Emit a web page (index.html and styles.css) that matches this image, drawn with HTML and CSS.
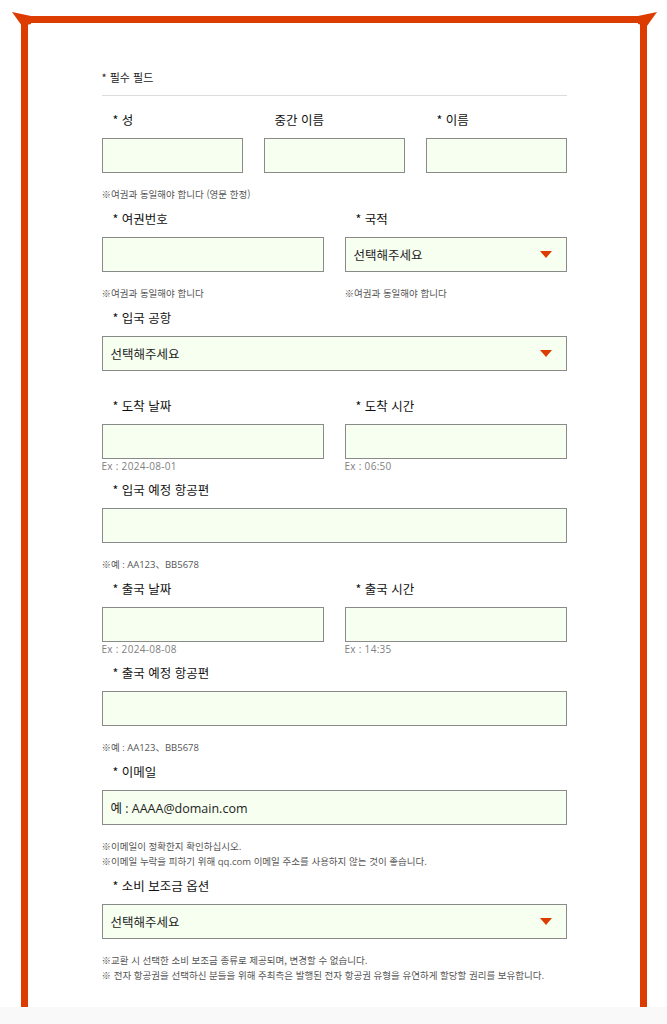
FILE: index.html
```html
<!DOCTYPE html>
<html lang="ko">
<head>
  <meta charset="UTF-8">
  <title>입국 정보 등록</title>
  <link rel="stylesheet" href="styles.css">
</head>
<body>

<div class="frame">
  <!-- flared corners -->
  <svg class="corner corner-left" width="20" height="16" viewBox="0 0 20 16">
    <polygon points="0,0 19,4 19,12 10,14" fill="#dc3c00"/>
  </svg>
  <svg class="corner corner-right" width="20" height="16" viewBox="0 0 20 16">
    <polygon points="20,0 1,4 1,12 10,14" fill="#dc3c00"/>
  </svg>

  <form class="entry-form">
    <div class="required-head">* 필수 필드</div>

    <div class="group">
      <div class="row three">
        <div class="field">
          <label>* 성</label>
          <input type="text">
        </div>
        <div class="field">
          <label>중간 이름</label>
          <input type="text">
        </div>
        <div class="field">
          <label>* 이름</label>
          <input type="text">
        </div>
      </div>
      <p class="note">※여권과 동일해야 합니다 (영문 한정)</p>
    </div>

    <div class="group">
      <div class="row two">
        <div class="field">
          <label>* 여권번호</label>
          <input type="text">
          <p class="note">※여권과 동일해야 합니다</p>
        </div>
        <div class="field">
          <label>* 국적</label>
          <div class="select-wrap"><select><option>선택해주세요</option></select></div>
          <p class="note">※여권과 동일해야 합니다</p>
        </div>
      </div>
    </div>

    <div class="group spaced">
      <label>* 입국 공항</label>
      <div class="select-wrap"><select><option>선택해주세요</option></select></div>
    </div>

    <div class="group">
      <div class="row two">
        <div class="field">
          <label>* 도착 날짜</label>
          <input type="text">
          <p class="hint">Ex : 2024-08-01</p>
        </div>
        <div class="field">
          <label>* 도착 시간</label>
          <input type="text">
          <p class="hint">Ex : 06:50</p>
        </div>
      </div>
    </div>

    <div class="group">
      <label>* 입국 예정 항공편</label>
      <input type="text">
      <p class="note latin">※예 : AA123、BB5678</p>
    </div>

    <div class="group">
      <div class="row two">
        <div class="field">
          <label>* 출국 날짜</label>
          <input type="text">
          <p class="hint">Ex : 2024-08-08</p>
        </div>
        <div class="field">
          <label>* 출국 시간</label>
          <input type="text">
          <p class="hint">Ex : 14:35</p>
        </div>
      </div>
    </div>

    <div class="group">
      <label>* 출국 예정 항공편</label>
      <input type="text">
      <p class="note latin">※예 : AA123、BB5678</p>
    </div>

    <div class="group">
      <label>* 이메일</label>
      <input type="text" class="email" placeholder="예 : AAAA@domain.com">
      <p class="note">※이메일이 정확한지 확인하십시오.<br>※이메일 누락을 피하기 위해 <span class="latin">qq.com</span> 이메일 주소를 사용하지 않는 것이 좋습니다.</p>
    </div>

    <div class="group">
      <label>* 소비 보조금 옵션</label>
      <div class="select-wrap"><select><option>선택해주세요</option></select></div>
      <p class="note">※교환 시 선택한 소비 보조금 종류로 제공되며, 변경할 수 없습니다.<br>※ 전자 항공권을 선택하신 분들을 위해 주최측은 발행된 전자 항공권 유형을 유연하게 할당할 권리를 보유합니다.</p>
    </div>
  </form>
</div>

<div class="page-bottom"></div>

</body>
</html>
```

FILE: styles.css
```css
body {
  margin: 0;
  background: #fff;
  font-family: "Noto Sans CJK KR", "Noto Sans", sans-serif;
  color: #222;
}

.frame {
  position: relative;
  margin: 16px 20px 0 21px;
  border: 7px solid #dc3c00;
  border-bottom: none;
  height: 991px;
  box-sizing: border-box;
  padding-top: 47px;
}

.corner {
  position: absolute;
  top: -11px;
}

.corner-left {
  left: -16px;
}

.corner-right {
  right: -17px;
}

.entry-form {
  width: 465px;
  margin: 0 auto;
}

.required-head {
  font-size: 11px;
  line-height: 14px;
  padding-bottom: 11px;
  border-bottom: 1px solid #dcdcdc;
  margin-bottom: 15px;
}

.group {
  margin-bottom: 8px;
}

.group.spaced {
  margin-bottom: 26px;
}

.row {
  display: grid;
  column-gap: 21px;
}

.row.three {
  grid-template-columns: repeat(3, 1fr);
}

.row.two {
  grid-template-columns: repeat(2, 1fr);
}

label {
  display: block;
  padding-left: 11px;
  font-size: 12.5px;
  line-height: 18px;
  font-weight: normal;
  color: #111;
  margin-bottom: 9px;
}

input[type="text"],
select {
  display: block;
  width: 100%;
  height: 35px;
  box-sizing: border-box;
  background: #f6fff0;
  border: 1px solid #8a8a8a;
  border-radius: 0;
  font-family: "Noto Sans CJK KR", sans-serif;
  font-size: 12.5px;
  color: #222;
  padding: 0 8px;
  margin: 0;
  outline: none;
}

input.email::placeholder {
  color: #222;
  font-family: "Open Sans", "Noto Sans CJK KR", sans-serif;
}

select {
  appearance: none;
  -webkit-appearance: none;
}

.select-wrap {
  position: relative;
}

.select-wrap::after {
  content: "";
  position: absolute;
  right: 15px;
  top: 14px;
  border-left: 6px solid transparent;
  border-right: 6px solid transparent;
  border-top: 7px solid #dc3c00;
  pointer-events: none;
}

.note {
  margin: 14px 0 0 0;
  font-size: 9.5px;
  line-height: 15px;
  color: #555;
}

.hint {
  margin: 0;
  font-family: "Open Sans", sans-serif;
  font-size: 10px;
  line-height: 14px;
  letter-spacing: 0.3px;
  color: #808080;
}

.latin {
  font-family: "Open Sans", "Noto Sans CJK KR", sans-serif;
}

.page-bottom {
  height: 17px;
  background: #f9f9f9;
}
```
